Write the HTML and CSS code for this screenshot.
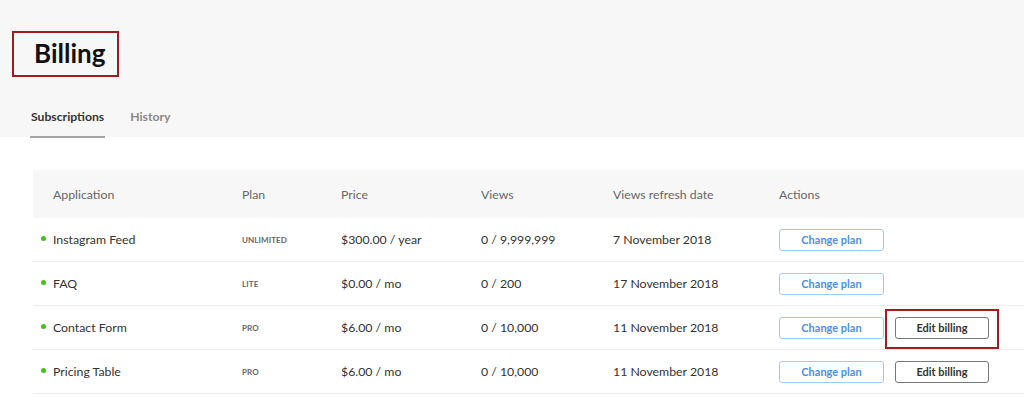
FILE: index.html
```html
<!DOCTYPE html>
<html>
<head>
<meta charset="utf-8">
<link rel="stylesheet" href="styles.css">
</head>
<body>
<header class="top">
  <div class="title-box"><h1 class="title">Billing</h1></div>
  <nav class="tabs">
    <a class="tab active">Subscriptions</a>
    <a class="tab">History</a>
  </nav>
</header>
<main class="content">
  <div class="table">
    <div class="row head">
      <div class="c app">Application</div>
      <div class="c">Plan</div>
      <div class="c">Price</div>
      <div class="c">Views</div>
      <div class="c">Views refresh date</div>
      <div class="c">Actions</div>
    </div>
    <div class="row">
      <div class="c app"><span class="dot"></span>Instagram Feed</div>
      <div class="c plan">UNLIMITED</div>
      <div class="c">$300.00 / year</div>
      <div class="c">0 / 9,999,999</div>
      <div class="c">7 November 2018</div>
      <div class="c actions"><button class="btn change">Change plan</button></div>
    </div>
    <div class="row">
      <div class="c app"><span class="dot"></span>FAQ</div>
      <div class="c plan">LITE</div>
      <div class="c">$0.00 / mo</div>
      <div class="c">0 / 200</div>
      <div class="c">17 November 2018</div>
      <div class="c actions"><button class="btn change">Change plan</button></div>
    </div>
    <div class="row">
      <div class="c app"><span class="dot"></span>Contact Form</div>
      <div class="c plan">PRO</div>
      <div class="c">$6.00 / mo</div>
      <div class="c">0 / 10,000</div>
      <div class="c">11 November 2018</div>
      <div class="c actions"><button class="btn change">Change plan</button><span class="highlight"><button class="btn edit">Edit billing</button></span></div>
    </div>
    <div class="row">
      <div class="c app"><span class="dot"></span>Pricing Table</div>
      <div class="c plan">PRO</div>
      <div class="c">$6.00 / mo</div>
      <div class="c">0 / 10,000</div>
      <div class="c">11 November 2018</div>
      <div class="c actions"><button class="btn change">Change plan</button><button class="btn edit">Edit billing</button></div>
    </div>
  </div>
</main>
</body>
</html>
```
FILE: styles.css
```css
* { box-sizing: border-box; }
html, body { margin: 0; padding: 0; }
body {
  font-family: Lato, "Liberation Sans", sans-serif;
  color: #333;
  background: #fff;
  width: 1024px;
  height: 398px;
  overflow: hidden;
}
.top {
  background: #f7f7f7;
  height: 137px;
  padding: 31px 0 0 12px;
}
.title-box {
  display: inline-block;
  width: 107px;
  height: 46px;
  border: 2px solid #a11d1d;
  padding: 0 0 0 20px;
}
.title {
  margin: 0;
  font-size: 26px;
  font-weight: 700;
  line-height: 41px;
  color: #111;
}
.tabs {
  display: flex;
  gap: 24px;
  margin: 23px 0 0 18px;
}
.tab {
  font-size: 12.2px;
  font-weight: 700;
  color: #888;
  padding: 9px 1px 12px;
  border-bottom: 2px solid transparent;
}
.tab.active {
  color: #333;
  border-bottom-color: #a5a5a5;
}
.content {
  padding: 33px 0 0 33px;
}
.table {
  width: 1000px;
}
.row {
  display: grid;
  grid-template-columns: 209px 99px 140px 132px 166px 1fr;
  height: 44px;
  align-items: center;
  border-bottom: 1px solid #ececec;
  font-size: 12.3px;
}
.row.head {
  height: 48px;
  background: #f7f7f7;
  border-bottom: none;
  color: #666;
}
.c { white-space: nowrap; }
.app {
  padding-left: 20px;
  position: relative;
}
.dot {
  position: absolute;
  left: 8px;
  top: 50%;
  width: 5px;
  height: 5px;
  margin-top: -4px;
  border-radius: 50%;
  background: #3cc21f;
}
.plan {
  font-size: 8px;
  font-weight: 700;
  color: #666;
  letter-spacing: 0.1px;
}
.actions {
  display: flex;
  gap: 11px;
  align-items: center;
}
.btn {
  font-family: inherit;
  font-size: 11px;
  font-weight: 700;
  height: 22px;
  border-radius: 3px;
  background: #fff;
  padding: 0;
  cursor: pointer;
}
.btn.change {
  width: 105px;
  color: #4a90e2;
  border: 1px solid #9fcbee;
}
.btn.edit {
  width: 94px;
  color: #333;
  border: 1px solid #777;
}
.highlight {
  position: relative;
  display: inline-flex;
}
.highlight::after {
  content: "";
  position: absolute;
  left: -10px;
  right: -10px;
  top: -8px;
  bottom: -10px;
  border: 2px solid #a11d1d;
}
```
